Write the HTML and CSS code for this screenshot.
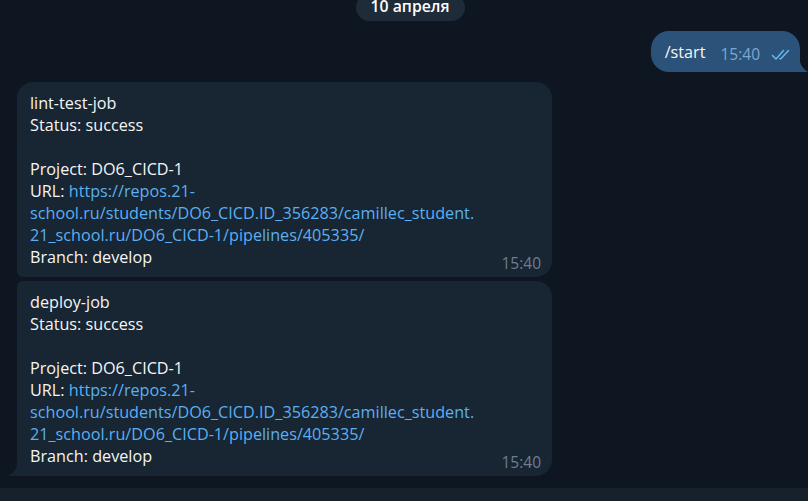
FILE: index.html
```html
<!DOCTYPE html>
<html lang="ru">
<head>
<meta charset="utf-8">
<title>Chat</title>
<link rel="stylesheet" href="styles.css">
</head>
<body>
<div class="chat">
  <div class="date-row"><span class="date-pill">10 апреля</span></div>

  <div class="row out">
    <div class="bubble bubble-out">
      <span class="text">/start</span>
      <span class="meta"><span class="time">15:40</span>
        <svg class="checks" width="21" height="12" viewBox="0 0 21 12"><path d="M1.5 6.5 L5 10 L12.5 1.5 M9 9.5 L9.6 10 L17.5 1.5" fill="none" stroke="#64b5ef" stroke-width="1.6" stroke-linecap="round" stroke-linejoin="round"/></svg>
      </span>
      <svg class="tail tail-out" width="9" height="18" viewBox="0 0 9 18"><path d="M0 0 C0 10 4 15 9 18 L0 18 Z" fill="#2b5278"/></svg>
    </div>
  </div>

  <div class="group">
    <div class="bubble bubble-in first">
      <p>lint-test-job<br>Status: success<br><br>Project: DO6_CICD-1<br>URL: <a href="#">https://repos.21-<br>school.ru/students/DO6_CICD.ID_356283/camillec_student.<br>21_school.ru/DO6_CICD-1/pipelines/405335/</a><br>Branch: develop</p>
      <span class="time-in">15:40</span>
    </div>
    <div class="bubble bubble-in last">
      <p>deploy-job<br>Status: success<br><br>Project: DO6_CICD-1<br>URL: <a href="#">https://repos.21-<br>school.ru/students/DO6_CICD.ID_356283/camillec_student.<br>21_school.ru/DO6_CICD-1/pipelines/405335/</a><br>Branch: develop</p>
      <span class="time-in">15:40</span>
      <svg class="tail tail-in" width="10" height="18" viewBox="0 0 10 18"><path d="M10 0 C10 10 6 15 0 18 L10 18 Z" fill="#182533"/></svg>
    </div>
  </div>

  <div class="composer"></div>
</div>
</body>
</html>
```

FILE: styles.css
```css
* { box-sizing: border-box; }
html, body {
  margin: 0;
  padding: 0;
  height: 100%;
  background: #0e1621;
  overflow: hidden;
}
body {
  font-family: "Open Sans", "Noto Sans", sans-serif;
  font-size: 16.2px;
  line-height: 22px;
  color: #f5f5f5;
}
.chat {
  height: 501px;
  display: flex;
  flex-direction: column;
}
.date-row {
  display: flex;
  justify-content: center;
  padding-left: 12px;
  margin-top: -6px;
}
.date-pill {
  display: block;
  background: #1e2b38;
  color: #ffffff;
  font-weight: 600;
  font-size: 15.8px;
  height: 27px;
  line-height: 12px;
  padding: 6px 15px 9px;
  border-radius: 14px;
}
.row.out {
  display: flex;
  justify-content: flex-end;
  padding-right: 8px;
  margin-top: 10px;
}
.bubble {
  position: relative;
}
.bubble-out {
  background: #2b5278;
  border-radius: 18px 18px 0 18px;
  height: 41px;
  padding: 10px 8px 9px 14px;
  display: flex;
  align-items: flex-start;
  gap: 15px;
}
.bubble-out .text {
  color: #f5f5f5;
}
.meta {
  display: flex;
  align-items: center;
  gap: 11px;
  margin-top: 6px;
  height: 14px;
}
.time {
  color: #7da8d3;
  font-size: 15.5px;
  line-height: 14px;
}
.checks { margin-top: 1px; }
.tail {
  position: absolute;
  bottom: 0;
}
.tail-out { right: -8px; }
.tail-in { left: -9px; }
.group {
  display: flex;
  flex-direction: column;
  gap: 4px;
  padding-left: 17px;
  margin-top: 10px;
}
.bubble-in {
  background: #182533;
  width: 535px;
  height: 195px;
  padding: 10px 13px 9px 13px;
}
.bubble-in.first { border-radius: 16px 16px 16px 6px; }
.bubble-in.last { border-radius: 6px 16px 16px 0; height: 195px; }
.bubble-in p { margin: 0; }
.bubble-in a {
  color: #5ab0f2;
  text-decoration: none;
}
.time-in {
  position: absolute;
  right: 11px;
  bottom: 5px;
  font-size: 15.5px;
  line-height: 18px;
  color: #6d7f8f;
}
.composer {
  margin-top: auto;
  height: 13px;
  background: #17212b;
}
```
